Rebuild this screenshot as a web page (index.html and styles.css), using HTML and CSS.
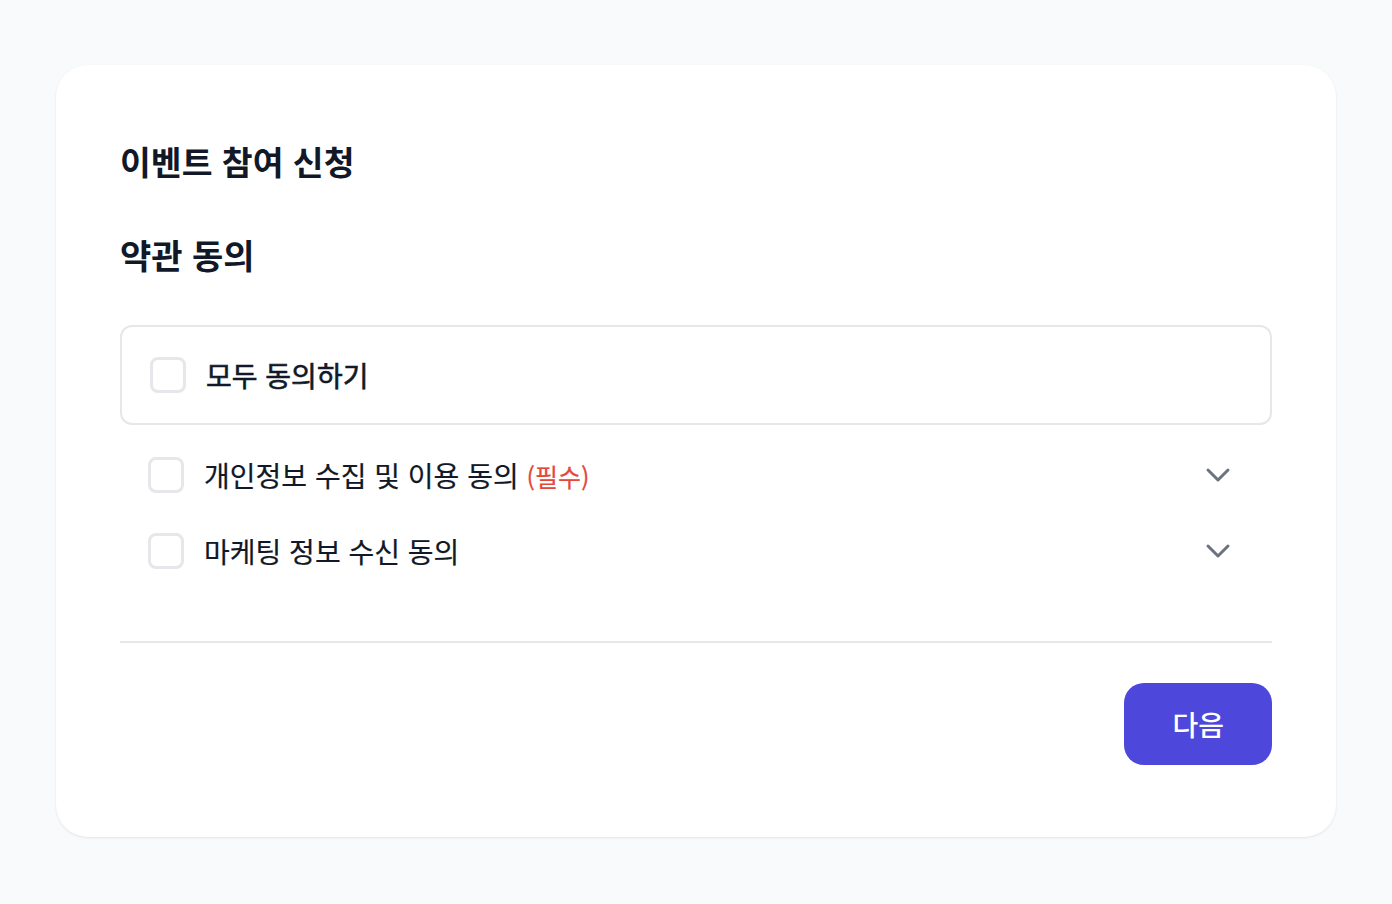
FILE: index.html
```html
<!DOCTYPE html>
<html lang="ko">
<head>
<meta charset="utf-8">
<title>이벤트 참여 신청</title>
<link rel="stylesheet" href="styles.css">
</head>
<body>
<main class="page">
  <section class="card">
    <h1 class="title">이벤트 참여 신청</h1>
    <h2 class="subtitle">약관 동의</h2>
    <label class="all-box">
      <span class="check"></span>
      <span class="all-text">모두 동의하기</span>
    </label>
    <div class="terms">
      <div class="term">
        <span class="check"></span>
        <span class="term-text">개인정보 수집 및 이용 동의 <span class="req">(필수)</span></span>
        <svg class="chev" viewBox="0 0 24 24" width="40" height="40" fill="none" stroke="currentColor" stroke-width="1.8" stroke-linecap="round" stroke-linejoin="round"><path d="M6 9l6 6 6-6"/></svg>
      </div>
      <div class="term">
        <span class="check"></span>
        <span class="term-text">마케팅 정보 수신 동의</span>
        <svg class="chev" viewBox="0 0 24 24" width="40" height="40" fill="none" stroke="currentColor" stroke-width="1.8" stroke-linecap="round" stroke-linejoin="round"><path d="M6 9l6 6 6-6"/></svg>
      </div>
    </div>
    <hr class="divider">
    <div class="actions">
      <button class="next" type="button">다음</button>
    </div>
  </section>
</main>
</body>
</html>
```
FILE: styles.css
```css
* { box-sizing: border-box; }
html, body { margin: 0; padding: 0; }
body {
  background: #f9fafb;
  font-family: "Noto Sans CJK KR", "Noto Sans", sans-serif;
  color: #111827;
}
.page {
  height: 904px;
  display: flex;
  align-items: flex-start;
  justify-content: center;
  padding-top: 65px;
}
.card {
  width: 1280px;
  background: #ffffff;
  border-radius: 32px;
  box-shadow: 0 1px 3px rgba(0,0,0,0.06), 0 1px 2px rgba(0,0,0,0.04);
  padding: 72px 64px;
  display: flex;
  flex-direction: column;
}
.title {
  margin: 0;
  font-size: 33.5px;
  line-height: 48px;
  font-weight: 700;
  color: #111827;
}
.subtitle {
  margin: 46px 0 0;
  font-size: 34px;
  line-height: 48px;
  font-weight: 700;
  color: #111827;
}
.all-box {
  margin-top: 46px;
  height: 100px;
  border: 2px solid #e5e7eb;
  border-radius: 12px;
  display: flex;
  align-items: center;
  padding: 0 28px;
  gap: 20px;
}
.check {
  width: 36px;
  height: 36px;
  flex: none;
  border: 3px solid #e5e7eb;
  border-radius: 8px;
  background: #fff;
}
.all-text {
  font-size: 28px;
  font-weight: 400;
  line-height: 40px;
  -webkit-text-stroke: 0.6px #111827;
}
.terms {
  margin-top: 24px;
  display: flex;
  flex-direction: column;
  gap: 24px;
}
.term {
  height: 52px;
  display: flex;
  align-items: center;
  padding: 0 34px 0 28px;
  gap: 20px;
}
.term-text {
  flex: 1;
  font-size: 28px;
  line-height: 40px;
  font-weight: 400;
  -webkit-text-stroke: 0.2px #111827;
}
.req {
  color: #e5483b;
  font-size: 25px;
  -webkit-text-stroke: 0.2px #e5483b;
}
.chev {
  color: #6b7280;
  flex: none;
}
.divider {
  margin: 64px 0 0;
  border: 0;
  height: 2px;
  background: #e5e7eb;
}
.actions {
  margin-top: 40px;
  display: flex;
  justify-content: flex-end;
}
.next {
  height: 82px;
  padding: 0 48px;
  border: 0;
  border-radius: 20px;
  background: #4d47db;
  color: #fff;
  font-family: "Noto Sans CJK KR", "Noto Sans", sans-serif;
  font-size: 28px;
  font-weight: 500;
}
```
